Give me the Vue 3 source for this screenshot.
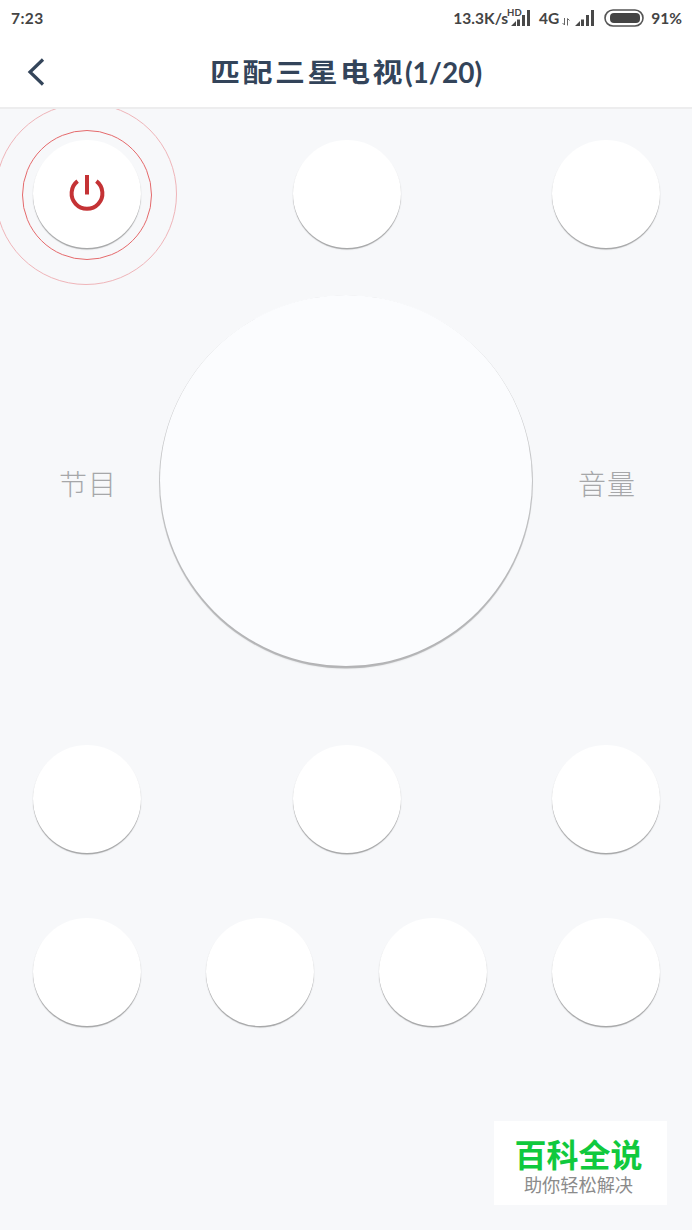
<script setup>
import { ref } from "vue";

const brand = ref("三星电视");
const current = ref(1);
const total = ref(20);
</script>

<template>
  <main class="remote">
    <header class="top">
      <div class="status">
        <span class="time">7:23</span>
        <span class="speed">13.3K/s</span>
        <span class="signal">
          <i class="hd">HD</i>
          <svg width="20" height="18" viewBox="0 0 20 18">
            <path d="M0 17L5 12V17ZM6 10.5H9V17H6ZM11 6H14V17H11ZM16 1H19V17H16Z" fill="#484848" />
          </svg>
        </span>
        <span class="net">4G</span>
        <svg class="arrows" width="8" height="8" viewBox="0 0 8 8">
          <path d="M2.5 0V7M0.5 5L2.5 7M5.5 7.5V0.5M7.5 2.5L5.5 0.5" fill="none" stroke="#666" />
        </svg>
        <svg class="bars" width="20" height="18" viewBox="0 0 20 18">
          <path d="M0 17L5 12V17ZM6 10.5H9V17H6ZM11 6H14V17H11ZM16 1H19V17H16Z" fill="#484848" />
        </svg>
        <svg class="battery" width="40" height="18" viewBox="0 0 40 18">
          <rect x="1" y="1" width="38" height="16" rx="8" fill="none" stroke="#555" stroke-width="1.6" />
          <rect x="6" y="4" width="30" height="10" rx="4" fill="#444" />
        </svg>
        <span class="percent">91%</span>
      </div>
      <div class="nav">
        <svg class="back" width="18" height="28" viewBox="0 0 18 28">
          <path d="M16 1.5L3 14L16 26.5" fill="none" stroke="#34455a" stroke-width="3.2" />
        </svg>
        <h1><span class="name">匹配{{ brand }}</span><span class="count">({{ current }}/{{ total }})</span></h1>
      </div>
    </header>

    <section class="keys">
      <div class="row">
        <button class="key power">
          <i class="ring"></i>
          <i class="ring outer"></i>
          <svg width="36" height="36" viewBox="0 0 36 36">
            <path d="M8.6 6.2A15.4 15.4 0 1 0 27.4 6.2" fill="none" stroke="#c43235" stroke-width="4" />
            <path d="M18 0V19.5" fill="none" stroke="#c43235" stroke-width="4" />
          </svg>
        </button>
        <button class="key" v-for="n in 2" :key="n"></button>
      </div>

      <div class="pad">
        <span class="label">节目</span>
        <div class="dial"></div>
        <span class="label volume">音量</span>
      </div>

      <div class="row third">
        <button class="key" v-for="n in 3" :key="n"></button>
      </div>
      <div class="row fourth">
        <button class="key" v-for="n in 4" :key="n"></button>
      </div>
    </section>

    <aside class="mark">
      <strong>百科全说</strong>
      <span>助你轻松解决</span>
    </aside>
  </main>
</template>

<style>
body {
  margin: 0;
  background-color: #f7f8fa;
}
</style>

<style scoped>
.remote {
  position: relative;
  width: 692px;
  height: 1230px;
  overflow: hidden;
  background-color: #f7f8fa;
  font-family: Lato, "Noto Sans CJK SC", sans-serif;
}

.top {
  position: relative;
  z-index: 1;
  height: 109px;
  box-sizing: border-box;
  background-color: #fff;
  border-bottom: 2px solid #ededee;
}

.status {
  display: flex;
  align-items: center;
  height: 35px;
  padding: 0 10px 0 11px;
  color: #444;
  font-size: 15.5px;
  font-weight: 700;
  white-space: nowrap;
}

.time {
  margin-right: auto;
  letter-spacing: 0.4px;
}

.signal {
  position: relative;
  display: flex;
  margin-left: 3px;
}

.hd {
  position: absolute;
  left: -4px;
  top: -1px;
  font-size: 9.5px;
  line-height: 9px;
  font-style: normal;
}

.net {
  margin-left: 8px;
}

.arrows {
  margin: 9px 5px 0 3px;
}

.battery {
  margin: 0 7px 0 9px;
}

.nav {
  display: grid;
  grid-template-columns: 60px 1fr 60px;
  align-items: center;
  height: 73px;
}

.back {
  margin-left: 27px;
}

h1 {
  display: flex;
  align-items: center;
  justify-content: center;
  margin: 0;
  color: #33445a;
  line-height: 40px;
  white-space: nowrap;
}

.name {
  font-size: 30px;
  letter-spacing: 2.5px;
  transform: scaleY(0.86);
}

.count {
  font-size: 28px;
  font-weight: 700;
}

.keys {
  padding: 31px 32px 0 33px;
}

.row {
  display: flex;
  justify-content: space-between;
}

.key {
  position: relative;
  display: flex;
  align-items: center;
  justify-content: center;
  width: 108px;
  height: 108px;
  padding: 0;
  border: none;
  border-radius: 50%;
  background-color: #fff;
  box-shadow: 0 1.5px 1px rgba(0, 0, 0, 0.34);
}

.power svg {
  margin-top: -2px;
}

.ring {
  position: absolute;
  left: -11px;
  top: -10px;
  width: 128px;
  height: 128px;
  border: 1px solid #e56a6c;
  border-radius: 50%;
}

.ring.outer {
  left: -38px;
  top: -37px;
  width: 180px;
  height: 180px;
  border-color: #efb5b9;
}

.pad {
  display: grid;
  grid-template-columns: 127px 372px 1fr;
  align-items: center;
  margin-top: 47px;
}

.dial {
  height: 371px;
  border-radius: 50%;
  background-color: #fbfcfe;
  box-shadow: 0 1.5px 0.5px 1px rgba(0, 0, 0, 0.18), 0 2.5px 2px rgba(0, 0, 0, 0.12);
}

.label {
  margin: 5px 0 0 26px;
  color: #a6a7a9;
  font-size: 28px;
  font-weight: 300;
  letter-spacing: 1px;
}

.volume {
  margin-left: 46px;
}

.third {
  margin-top: 79px;
}

.fourth {
  margin-top: 65px;
}

.mark {
  position: absolute;
  left: 494px;
  top: 1121px;
  display: flex;
  flex-direction: column;
  align-items: center;
  width: 173px;
  height: 84px;
  background-color: #fff;
}

.mark strong {
  margin: 13px 4px 0 0;
  color: #10c93d;
  font-size: 32px;
  line-height: 42px;
  font-weight: 700;
}

.mark span {
  margin-right: 4px;
  color: #8b8b8b;
  font-size: 18.2px;
  line-height: 19px;
}
</style>
